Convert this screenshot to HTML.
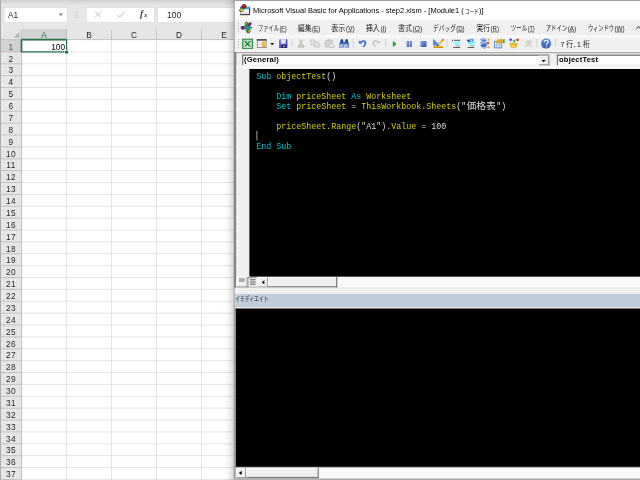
<!DOCTYPE html>
<html lang="ja"><head><meta charset="utf-8"><title>step2.xlsm - Microsoft Visual Basic for Applications</title>
<style>
*{box-sizing:border-box;margin:0;padding:0}
html,body{width:640px;height:480px;overflow:hidden;background:#fff}
body{position:relative;font-family:"Liberation Sans",sans-serif;font-size:8px;color:#000}
.a{position:absolute}
.t{position:absolute;white-space:nowrap;line-height:1;will-change:transform}
svg{position:absolute;left:0;top:0;overflow:visible}
.mn{font-family:"Liberation Sans","Noto Sans CJK JP",sans-serif;font-size:7.5px;fill:#1a1a1a}
.cd{font-family:"Liberation Mono","Noto Sans CJK JP",monospace;font-size:8.33px;white-space:pre}
</style></head>
<body>
<!-- Excel -->
<div class="a" style="left:0;top:0;width:234.5px;height:40px;background:#e6e6e6"></div>
<div class="a" style="left:0;top:0;width:234.5px;height:5px;background:linear-gradient(#cfcfcf,#e6e6e6)"></div>
<svg width="640" height="480" viewBox="0 0 640 480">
<rect x="4.1" y="7.4" width="63.40" height="15.2" fill="#fff" stroke="#d9d9d9" stroke-width="0.7"/>
<rect x="86.3" y="7.4" width="68.30" height="15.2" fill="#fff" stroke="#d9d9d9" stroke-width="0.7"/>
<rect x="157.6" y="7.4" width="82.40" height="15.2" fill="#fff" stroke="#d9d9d9" stroke-width="0.7"/>
</svg>
<div class="a" style="left:0;top:39px;width:21.5px;height:441px;background:#e6e6e6"></div>
<div class="t" style="left:8.20px;top:11.17px;font-size:8.3px;color:#2c2c2c;">A1</div>
<svg width="640" height="480" viewBox="0 0 640 480">
<path d="M58.6 13.6h4.4l-2.2 2.4z" fill="#777"/>
<rect x="76.2" y="11.8" width="1" height="1" fill="#a8a8a8"/><rect x="76.2" y="14.3" width="1" height="1" fill="#a8a8a8"/><rect x="76.2" y="16.8" width="1" height="1" fill="#a8a8a8"/>
</svg>
<div class="t" style="left:166.90px;top:10.55px;font-size:8.450000000000001px;color:#222;">100</div>
<svg width="640" height="480" viewBox="0 0 640 480" fill="none">
<path d="M95.3 12.1l5.6 4.8M100.9 12.1l-5.6 4.8" stroke="#b4b4b4" stroke-width="0.8"/>
<path d="M117.4 15l2.2 2.3 5-5.6" stroke="#b4b4b4" stroke-width="0.9"/>
</svg>
<div class="t" style="left:140.00px;top:9.00px;font-size:9.8px;color:#444;font-family:'Liberation Serif',serif;font-weight:bold;"><i>f</i></div>
<div class="t" style="left:143.60px;top:12.11px;font-size:6.6px;color:#444;font-family:'Liberation Serif',serif;font-weight:bold;"><i>x</i></div>
<div class="a" style="left:21.5px;top:29px;width:45.0px;height:10.6px;background:#d2d2d2"></div>
<div class="a" style="left:0;top:39.6px;width:21.5px;height:12.599999999999998px;background:#d2d2d2"></div>
<svg width="640" height="480" viewBox="0 0 640 480" fill="none">
<path d="M21.5 51.90H234.5M21.5 63.77H234.5M21.5 75.65H234.5M21.5 87.53H234.5M21.5 99.40H234.5M21.5 111.28H234.5M21.5 123.15H234.5M21.5 135.03H234.5M21.5 146.90H234.5M21.5 158.78H234.5M21.5 170.65H234.5M21.5 182.53H234.5M21.5 194.40H234.5M21.5 206.28H234.5M21.5 218.15H234.5M21.5 230.03H234.5M21.5 241.90H234.5M21.5 253.78H234.5M21.5 265.65H234.5M21.5 277.52H234.5M21.5 289.40H234.5M21.5 301.27H234.5M21.5 313.15H234.5M21.5 325.02H234.5M21.5 336.90H234.5M21.5 348.77H234.5M21.5 360.65H234.5M21.5 372.52H234.5M21.5 384.40H234.5M21.5 396.27H234.5M21.5 408.15H234.5M21.5 420.02H234.5M21.5 431.90H234.5M21.5 443.77H234.5M21.5 455.65H234.5M21.5 467.52H234.5M21.5 479.40H234.5" stroke="#d6d6d6" stroke-width="0.65"/>
<path d="M66.50 40V480M111.50 40V480M156.50 40V480M201.50 40V480M246.50 40V480" stroke="#d6d6d6" stroke-width="0.65"/>
<path d="M1 51.90H21.5M1 63.77H21.5M1 75.65H21.5M1 87.53H21.5M1 99.40H21.5M1 111.28H21.5M1 123.15H21.5M1 135.03H21.5M1 146.90H21.5M1 158.78H21.5M1 170.65H21.5M1 182.53H21.5M1 194.40H21.5M1 206.28H21.5M1 218.15H21.5M1 230.03H21.5M1 241.90H21.5M1 253.78H21.5M1 265.65H21.5M1 277.52H21.5M1 289.40H21.5M1 301.27H21.5M1 313.15H21.5M1 325.02H21.5M1 336.90H21.5M1 348.77H21.5M1 360.65H21.5M1 372.52H21.5M1 384.40H21.5M1 396.27H21.5M1 408.15H21.5M1 420.02H21.5M1 431.90H21.5M1 443.77H21.5M1 455.65H21.5M1 467.52H21.5M1 479.40H21.5M66.50 29.5V39.5M111.50 29.5V39.5M156.50 29.5V39.5M201.50 29.5V39.5M246.50 29.5V39.5M21.5 29.5V480M0 39.6H234.5" stroke="#b2b2b2" stroke-width="0.7"/>
<path d="M19.6 31.8v5.9h-6.4z" fill="#b7b7b7"/>
<path d="M21.5 39.3H66.5" stroke="#217346" stroke-width="1.1"/>
<path d="M21.2 39.6V51.9" stroke="#217346" stroke-width="1.1"/>
<rect x="21.7" y="39.9" width="44.90" height="12.00" stroke="#217346" stroke-width="1.25"/>
<rect x="64.80" y="50.30" width="3.6" height="3.6" fill="#217346" stroke="#fff" stroke-width="0.6"/>
</svg>
<div class="a" style="left:0;top:0;width:1px;height:480px;background:#ababab"></div>
<div class="t" style="left:-6.00px;width:100px;text-align:center;top:31.07px;font-size:8.3px;color:#217346;">A</div>
<div class="t" style="left:39.00px;width:100px;text-align:center;top:31.07px;font-size:8.3px;color:#262626;">B</div>
<div class="t" style="left:84.00px;width:100px;text-align:center;top:31.07px;font-size:8.3px;color:#262626;">C</div>
<div class="t" style="left:129.00px;width:100px;text-align:center;top:31.07px;font-size:8.3px;color:#262626;">D</div>
<div class="t" style="left:174.00px;width:100px;text-align:center;top:31.07px;font-size:8.3px;color:#262626;">E</div>
<div class="t" style="left:-39.00px;width:100px;text-align:center;top:42.62px;font-size:8.3px;color:#217346;letter-spacing:0.4px;">1</div>
<div class="t" style="left:-39.00px;width:100px;text-align:center;top:54.50px;font-size:8.3px;color:#262626;letter-spacing:0.4px;">2</div>
<div class="t" style="left:-39.00px;width:100px;text-align:center;top:66.37px;font-size:8.3px;color:#262626;letter-spacing:0.4px;">3</div>
<div class="t" style="left:-39.00px;width:100px;text-align:center;top:78.25px;font-size:8.3px;color:#262626;letter-spacing:0.4px;">4</div>
<div class="t" style="left:-39.00px;width:100px;text-align:center;top:90.12px;font-size:8.3px;color:#262626;letter-spacing:0.4px;">5</div>
<div class="t" style="left:-39.00px;width:100px;text-align:center;top:102.00px;font-size:8.3px;color:#262626;letter-spacing:0.4px;">6</div>
<div class="t" style="left:-39.00px;width:100px;text-align:center;top:113.87px;font-size:8.3px;color:#262626;letter-spacing:0.4px;">7</div>
<div class="t" style="left:-39.00px;width:100px;text-align:center;top:125.75px;font-size:8.3px;color:#262626;letter-spacing:0.4px;">8</div>
<div class="t" style="left:-39.00px;width:100px;text-align:center;top:137.62px;font-size:8.3px;color:#262626;letter-spacing:0.4px;">9</div>
<div class="t" style="left:-38.65px;width:100px;text-align:center;top:149.50px;font-size:8.3px;color:#262626;letter-spacing:0.4px;">10</div>
<div class="t" style="left:-38.65px;width:100px;text-align:center;top:161.37px;font-size:8.3px;color:#262626;letter-spacing:0.4px;">11</div>
<div class="t" style="left:-38.65px;width:100px;text-align:center;top:173.25px;font-size:8.3px;color:#262626;letter-spacing:0.4px;">12</div>
<div class="t" style="left:-38.65px;width:100px;text-align:center;top:185.12px;font-size:8.3px;color:#262626;letter-spacing:0.4px;">13</div>
<div class="t" style="left:-38.65px;width:100px;text-align:center;top:197.00px;font-size:8.3px;color:#262626;letter-spacing:0.4px;">14</div>
<div class="t" style="left:-38.65px;width:100px;text-align:center;top:208.87px;font-size:8.3px;color:#262626;letter-spacing:0.4px;">15</div>
<div class="t" style="left:-38.65px;width:100px;text-align:center;top:220.75px;font-size:8.3px;color:#262626;letter-spacing:0.4px;">16</div>
<div class="t" style="left:-38.65px;width:100px;text-align:center;top:232.62px;font-size:8.3px;color:#262626;letter-spacing:0.4px;">17</div>
<div class="t" style="left:-38.65px;width:100px;text-align:center;top:244.50px;font-size:8.3px;color:#262626;letter-spacing:0.4px;">18</div>
<div class="t" style="left:-38.65px;width:100px;text-align:center;top:256.37px;font-size:8.3px;color:#262626;letter-spacing:0.4px;">19</div>
<div class="t" style="left:-38.65px;width:100px;text-align:center;top:268.25px;font-size:8.3px;color:#262626;letter-spacing:0.4px;">20</div>
<div class="t" style="left:-38.65px;width:100px;text-align:center;top:280.12px;font-size:8.3px;color:#262626;letter-spacing:0.4px;">21</div>
<div class="t" style="left:-38.65px;width:100px;text-align:center;top:292.00px;font-size:8.3px;color:#262626;letter-spacing:0.4px;">22</div>
<div class="t" style="left:-38.65px;width:100px;text-align:center;top:303.87px;font-size:8.3px;color:#262626;letter-spacing:0.4px;">23</div>
<div class="t" style="left:-38.65px;width:100px;text-align:center;top:315.75px;font-size:8.3px;color:#262626;letter-spacing:0.4px;">24</div>
<div class="t" style="left:-38.65px;width:100px;text-align:center;top:327.62px;font-size:8.3px;color:#262626;letter-spacing:0.4px;">25</div>
<div class="t" style="left:-38.65px;width:100px;text-align:center;top:339.50px;font-size:8.3px;color:#262626;letter-spacing:0.4px;">26</div>
<div class="t" style="left:-38.65px;width:100px;text-align:center;top:351.37px;font-size:8.3px;color:#262626;letter-spacing:0.4px;">27</div>
<div class="t" style="left:-38.65px;width:100px;text-align:center;top:363.25px;font-size:8.3px;color:#262626;letter-spacing:0.4px;">28</div>
<div class="t" style="left:-38.65px;width:100px;text-align:center;top:375.12px;font-size:8.3px;color:#262626;letter-spacing:0.4px;">29</div>
<div class="t" style="left:-38.65px;width:100px;text-align:center;top:387.00px;font-size:8.3px;color:#262626;letter-spacing:0.4px;">30</div>
<div class="t" style="left:-38.65px;width:100px;text-align:center;top:398.87px;font-size:8.3px;color:#262626;letter-spacing:0.4px;">31</div>
<div class="t" style="left:-38.65px;width:100px;text-align:center;top:410.75px;font-size:8.3px;color:#262626;letter-spacing:0.4px;">32</div>
<div class="t" style="left:-38.65px;width:100px;text-align:center;top:422.62px;font-size:8.3px;color:#262626;letter-spacing:0.4px;">33</div>
<div class="t" style="left:-38.65px;width:100px;text-align:center;top:434.50px;font-size:8.3px;color:#262626;letter-spacing:0.4px;">34</div>
<div class="t" style="left:-38.65px;width:100px;text-align:center;top:446.37px;font-size:8.3px;color:#262626;letter-spacing:0.4px;">35</div>
<div class="t" style="left:-38.65px;width:100px;text-align:center;top:458.25px;font-size:8.3px;color:#262626;letter-spacing:0.4px;">36</div>
<div class="t" style="left:-38.65px;width:100px;text-align:center;top:470.12px;font-size:8.3px;color:#262626;letter-spacing:0.4px;">37</div>
<div class="t" style="left:-35.40px;width:100px;text-align:right;top:42.97px;font-size:8.3px;color:#000;">100</div>
<!-- VBA window -->
<div class="a" style="left:224px;top:0;width:10px;height:480px;background:linear-gradient(90deg,rgba(0,0,0,0),rgba(0,0,0,0.03) 40%,rgba(0,0,0,0.17))"></div>
<svg width="640" height="480" viewBox="0 0 640 480">
<rect x="234.9" y="0" width="405.1" height="480" fill="#f0f0f0"/>
<rect x="234.9" y="0" width="405.1" height="19.7" fill="#fff"/>
<rect x="233.6" y="0" width="406.4" height="1" fill="#9e9e9e"/>
<rect x="233.6" y="0" width="1.3" height="480" fill="#adadad"/>
<rect x="234.9" y="34.8" width="405.1" height="1" fill="#f8f8f8"/>
<rect x="234.9" y="35.8" width="405.1" height="1.2" fill="#fcfcfc"/>
<rect x="234.9" y="37" width="405.1" height="1.5" fill="#f6f6f6"/>
<rect x="234.9" y="51" width="405.1" height="1" fill="#fbfbfb"/>
<rect x="234.1" y="52" width="405.9" height="1.3" fill="#a6a6a6"/>
<rect x="234.1" y="52" width="2.3" height="235.6" fill="#828282"/>
<rect x="236.4" y="53.3" width="403.6" height="1.2" fill="#e4e4e4"/>
<rect x="242.1" y="54.5" width="307.3" height="11" fill="#fff"/>
<rect x="242.1" y="54.5" width="307.3" height="1.3" fill="#727272"/>
<rect x="242.1" y="54.5" width="1.2" height="11" fill="#727272"/>
<rect x="243.3" y="64.8" width="306.1" height="0.7" fill="#dcdcdc"/>
<rect x="556.9" y="54.5" width="103.1" height="11" fill="#fff"/>
<rect x="556.9" y="54.5" width="103.1" height="1.3" fill="#727272"/>
<rect x="556.9" y="54.5" width="1.2" height="11" fill="#727272"/>
<rect x="558.1" y="64.8" width="101.9" height="0.7" fill="#dcdcdc"/>
<rect x="539" y="55.8" width="10.4" height="9.7" fill="#f0f0f0"/>
<rect x="539" y="55.8" width="0.8" height="8.6" fill="#fff"/>
<rect x="539" y="55.8" width="9.3" height="0.8" fill="#fff"/>
<rect x="548.3" y="55.8" width="1.1" height="9.7" fill="#7c7c7c"/>
<rect x="539" y="64.4" width="10.4" height="1.1" fill="#7c7c7c"/>
<rect x="236.4" y="65.6" width="403.6" height="3.4" fill="#f8f8f8"/>
<rect x="236.4" y="65.6" width="5.7" height="3.4" fill="#f2f2f2"/>
<rect x="236.4" y="69" width="13" height="207.8" fill="#f0f0f0"/>
<rect x="249.4" y="69" width="390.6" height="207.8" fill="#000"/>
<rect x="236.4" y="276.8" width="403.6" height="10.2" fill="#f8f8f8"/>
<rect x="236.6" y="277.1" width="10.9" height="10.3" fill="#f0f0f0"/>
<rect x="236.6" y="277.1" width="0.8" height="9.3" fill="#fff"/>
<rect x="236.6" y="277.1" width="9.9" height="0.8" fill="#fff"/>
<rect x="246.5" y="277.1" width="1" height="10.3" fill="#8c8c8c"/>
<rect x="236.6" y="286.4" width="10.9" height="1" fill="#8c8c8c"/>
<rect x="247.5" y="277.1" width="9.2" height="10.3" fill="#f0f0f0"/>
<rect x="247.5" y="277.1" width="9.2" height="1" fill="#8c8c8c"/>
<rect x="247.5" y="277.1" width="1" height="10.3" fill="#8c8c8c"/>
<rect x="247.5" y="286.6" width="9.6" height="0.9" fill="#a8a8a8"/>
<rect x="257.4" y="277.1" width="10.6" height="10.3" fill="#f2f2f2"/>
<rect x="257.4" y="277.1" width="0.8" height="9.3" fill="#fff"/>
<rect x="257.4" y="277.1" width="9.6" height="0.8" fill="#fff"/>
<rect x="267" y="277.1" width="1" height="10.3" fill="#9c9c9c"/>
<rect x="257.4" y="286.4" width="10.6" height="1" fill="#9c9c9c"/>
<rect x="268" y="277.1" width="69.2" height="10.3" fill="#f0f0f0"/>
<rect x="268" y="277.1" width="0.8" height="9.1" fill="#fff"/>
<rect x="268" y="277.1" width="68" height="0.8" fill="#fff"/>
<rect x="336" y="277.1" width="1.2" height="10.3" fill="#7e7e7e"/>
<rect x="268" y="286.2" width="69.2" height="1.2" fill="#7e7e7e"/>
<rect x="234.9" y="294" width="405.1" height="13" fill="#bfcddb"/>
<rect x="234.9" y="307" width="405.1" height="1.2" fill="#e6eaee"/>
<rect x="234.9" y="308.1" width="405.1" height="1" fill="#6a6a6a"/>
<rect x="234.5" y="309" width="1.5" height="171" fill="#8e8e8e"/>
<rect x="236" y="309" width="404" height="157.9" fill="#000"/>
<rect x="236" y="466.9" width="404" height="1" fill="#a0a0a0"/>
<rect x="236" y="467.9" width="404" height="10.7" fill="#f8f8f8"/>
<rect x="234.5" y="478.6" width="405.5" height="1.4" fill="#a6a6a6"/>
<rect x="234.5" y="477" width="84.4" height="3" fill="#b2b2b2"/>
<rect x="235.8" y="467.9" width="10.2" height="10.2" fill="#f4f4f4"/>
<rect x="235.8" y="467.9" width="0.8" height="9.2" fill="#fff"/>
<rect x="235.8" y="467.9" width="9.2" height="0.8" fill="#fff"/>
<rect x="245" y="467.9" width="1" height="10.2" fill="#989898"/>
<rect x="235.8" y="477.1" width="10.2" height="1" fill="#989898"/>
<rect x="246.2" y="467.9" width="72.6" height="10.2" fill="#f0f0f0"/>
<rect x="246.2" y="467.9" width="0.8" height="9" fill="#fff"/>
<rect x="246.2" y="467.9" width="71.4" height="0.8" fill="#fff"/>
<rect x="317.6" y="467.9" width="1.2" height="10.2" fill="#7e7e7e"/>
<rect x="246.2" y="476.9" width="72.6" height="1.2" fill="#7e7e7e"/>
</svg>
<div class="t" style="left:243.80px;top:55.87px;font-size:7.6px;color:#000;font-weight:bold;letter-spacing:0.19px;">(General)</div>
<div class="t" style="left:559.40px;top:55.87px;font-size:7.6px;color:#000;font-weight:bold;letter-spacing:0.18px;">objectTest</div>
<div class="t" id="ttl" style="left:252.8px;top:7.45px;font-size:7.5px;color:#000;transform-origin:0 0;transform:scaleX(1)">Microsoft Visual Basic for Applications - step2.xlsm - [Module1 (</div>
<div class="t" style="left:478.90px;top:7.45px;font-size:7.5px;color:#000;">)]</div>
<svg width="640" height="480" viewBox="0 0 640 480">
<text x="464.9" y="13.5" font-size="6.5" fill="#222" font-family="'Liberation Sans','Noto Sans CJK JP',sans-serif" textLength="13.7" lengthAdjust="spacingAndGlyphs">コード</text>
<text class="mn" x="257.9" y="30.67" textLength="21" lengthAdjust="spacingAndGlyphs">ファイル</text>
<text class="mn" x="279.4" y="30.67" textLength="7.4" lengthAdjust="spacingAndGlyphs">(F)</text>
<text class="mn" x="297.7" y="30.67" textLength="13.9" lengthAdjust="spacingAndGlyphs">編集</text>
<text class="mn" x="312.05" y="30.67" textLength="8.2" lengthAdjust="spacingAndGlyphs">(E)</text>
<text class="mn" x="331.3" y="30.67" textLength="14.1" lengthAdjust="spacingAndGlyphs">表示</text>
<text class="mn" x="346" y="30.67" textLength="8.6" lengthAdjust="spacingAndGlyphs">(V)</text>
<text class="mn" x="365.7" y="30.67" textLength="14.1" lengthAdjust="spacingAndGlyphs">挿入</text>
<text class="mn" x="380.4" y="30.67" textLength="6.1" lengthAdjust="spacingAndGlyphs">(I)</text>
<text class="mn" x="398.1" y="30.67" textLength="13.9" lengthAdjust="spacingAndGlyphs">書式</text>
<text class="mn" x="412.5" y="30.67" textLength="9.6" lengthAdjust="spacingAndGlyphs">(O)</text>
<text class="mn" x="433.1" y="30.67" textLength="22.8" lengthAdjust="spacingAndGlyphs">デバッグ</text>
<text class="mn" x="456.15" y="30.67" textLength="8.5" lengthAdjust="spacingAndGlyphs">(D)</text>
<text class="mn" x="476.5" y="30.67" textLength="13.6" lengthAdjust="spacingAndGlyphs">実行</text>
<text class="mn" x="490.6" y="30.67" textLength="8.4" lengthAdjust="spacingAndGlyphs">(R)</text>
<text class="mn" x="510.7" y="30.67" textLength="16.5" lengthAdjust="spacingAndGlyphs">ツール</text>
<text class="mn" x="527.65" y="30.67" textLength="7" lengthAdjust="spacingAndGlyphs">(T)</text>
<text class="mn" x="545.7" y="30.67" textLength="21.6" lengthAdjust="spacingAndGlyphs">アドイン</text>
<text class="mn" x="567.85" y="30.67" textLength="8.1" lengthAdjust="spacingAndGlyphs">(A)</text>
<text class="mn" x="587.9" y="30.67" textLength="26" lengthAdjust="spacingAndGlyphs">ウィンドウ</text>
<text class="mn" x="614.45" y="30.67" textLength="10.2" lengthAdjust="spacingAndGlyphs">(W)</text>
<text class="mn" x="635.7" y="30.67" textLength="19" lengthAdjust="spacingAndGlyphs">ヘルプ</text>
<text class="mn" x="654.9" y="30.67" textLength="8.7" lengthAdjust="spacingAndGlyphs">(H)</text>
<path d="M281.26 31.85H285.01M314.05 31.85H318.25M348.04 31.85H352.61M382.42 31.85H384.50M414.51 31.85H420.14M457.97 31.85H462.85M492.56 31.85H497.08M529.36 31.85H532.99M569.74 31.85H574.05M616.39 31.85H622.73M656.75 31.85H661.71" stroke="#1a1a1a" stroke-width="0.6" fill="none"/>
<text x="560.4" y="46.93" font-size="7.5" fill="#1a1a1a" font-family="'Liberation Sans','Noto Sans CJK JP',sans-serif" textLength="29.5" lengthAdjust="spacingAndGlyphs">7 行, 1 桁</text>
<text x="235.2" y="300.9" font-size="7" fill="#1a1a1a" font-family="'Liberation Sans','Noto Sans CJK JP',sans-serif" textLength="33.3" lengthAdjust="spacingAndGlyphs">イミディエイト</text>
<g fill="#00c4c8">
<text class="cd" x="256.25" y="78.99">Sub</text>
<text class="cd" x="276.25" y="98.99">Dim</text>
<text class="cd" x="351.25" y="98.99">As</text>
<text class="cd" x="276.25" y="108.99">Set</text>
<text class="cd" x="256.25" y="148.99">End</text>
<text class="cd" x="276.25" y="148.99">Sub</text>
</g>
<g fill="#d0d000">
<text class="cd" x="276.25" y="78.99">objectTest</text>
<text class="cd" x="296.25" y="98.99">priceSheet</text>
<text class="cd" x="366.25" y="98.99">Worksheet</text>
<text class="cd" x="296.25" y="108.99">priceSheet</text>
<text class="cd" x="361.25" y="108.99">ThisWorkbook</text>
<text class="cd" x="426.25" y="108.99">Sheets</text>
<text class="cd" x="276.25" y="128.99">priceSheet</text>
<text class="cd" x="331.25" y="128.99">Range</text>
<text class="cd" x="391.25" y="128.99">Value</text>
</g>
<g fill="#dcdcdc">
<text class="cd" x="326.25" y="78.99">()</text>
<text class="cd" x="351.25" y="108.99">=</text>
<text class="cd" x="421.25" y="108.99">.</text>
<text class="cd" x="456.25" y="108.99">("</text>
<text x="466.4" y="109.2" font-size="9.5" font-family="'Liberation Mono','Noto Sans CJK JP',monospace" textLength="29.6" lengthAdjust="spacingAndGlyphs">価格表</text>
<text class="cd" x="496.25" y="108.99">")</text>
<text class="cd" x="326.25" y="128.99">.</text>
<text class="cd" x="356.25" y="128.99">("A1")</text>
<text class="cd" x="386.25" y="128.99">.</text>
<text class="cd" x="421.25" y="128.99">=</text>
<text class="cd" x="431.25" y="128.99">100</text>
</g>
<path d="M256.9 131V140.4" stroke="#d8d8d8" stroke-width="0.8" fill="none"/>
<path d="M264.4 280.2v4.2l-2.6-2.1z" fill="#000"/>
<path d="M241.7 470.8v4.2l-2.9-2.1z" fill="#000"/>
<path d="M541.6 60h4l-2 2.3z" fill="#000"/>
<path d="M239 279h5.6M239 281h5.6" stroke="#666" stroke-width="1" fill="none"/>
<path d="M250 279.8h5.6M250 282h5.6M250 284.2h5.6" stroke="#5a5a5a" stroke-width="1" fill="none"/>
<!-- icons -->
<defs>
<linearGradient id="gb" x1="0" y1="0" x2="1" y2="1"><stop offset="0" stop-color="#8fb0f4"/><stop offset="1" stop-color="#2746a8"/></linearGradient>
<linearGradient id="gt" x1="0" y1="0" x2="1" y2="0"><stop offset="0" stop-color="#3a62d0"/><stop offset="1" stop-color="#25c4e6"/></linearGradient>
<linearGradient id="gs" x1="0" y1="0" x2="1" y2="1"><stop offset="0" stop-color="#8a8af0"/><stop offset="1" stop-color="#2a2aa0"/></linearGradient>
<linearGradient id="gh" x1="0" y1="0" x2="0" y2="1"><stop offset="0" stop-color="#5a8ede"/><stop offset="1" stop-color="#2c5eb8"/></linearGradient>
<linearGradient id="gr" x1="0" y1="0" x2="0" y2="1"><stop offset="0" stop-color="#f0c030"/><stop offset="1" stop-color="#b88408"/></linearGradient>
</defs>
<g fill="#aaa"><rect x="238" y="22.9" width="0.9" height="0.9"/><rect x="238" y="25.5" width="0.9" height="0.9"/><rect x="238" y="28.1" width="0.9" height="0.9"/><rect x="238" y="30.7" width="0.9" height="0.9"/><rect x="238" y="38.9" width="0.9" height="0.9"/><rect x="238" y="41.5" width="0.9" height="0.9"/><rect x="238" y="44.1" width="0.9" height="0.9"/><rect x="238" y="46.7" width="0.9" height="0.9"/></g>
<g>
<rect x="240.3" y="7.1" width="9.2" height="7.6" fill="#fdfdfd" stroke="#6a6a6a" stroke-width="0.7"/>
<path d="M240.4 12.6h9v1.6h-9z" fill="#e4e4e4"/>
<path d="M240 14.7h9.6v-7.4" fill="none" stroke="#2a2a2a" stroke-width="1"/>
<rect x="240.4" y="7" width="9" height="2.3" fill="url(#gt)"/>
<path d="M242 12.2h4.6" stroke="#b0b0b0" stroke-width="0.7"/>
<ellipse cx="244" cy="6.2" rx="2.2" ry="1.8" fill="#c40808" stroke="#3a0808" stroke-width="0.6"/>
<ellipse cx="243.4" cy="5.6" rx="0.8" ry="0.5" fill="#ee5a5a"/>
<path d="M238.9 10.5l2.6-2.5 2.7 1.1-2.7 2.9z" fill="#cccc10" stroke="#33330a" stroke-width="0.6"/>
</g>
<g stroke="#0c2a2a" stroke-width="0.5">
<path d="M241.6 27l4-1.2 0.6-3 2 0.4 0.4 3 3.6 1.6-3 1 -0.4 3.6-1.8 0.2-1-3.6z" fill="#1f9494"/>
<path d="M244.8 26.4l3.4 0.3 1 2.5-3.8-0.1z" fill="#2aaeae" stroke="none"/>
<ellipse cx="246.3" cy="23.7" rx="1.25" ry="1.6" fill="#b4b410"/>
<ellipse cx="249.8" cy="24.2" rx="1.3" ry="1.8" transform="rotate(30 249.8 24.2)" fill="#b010b0"/>
<ellipse cx="242.7" cy="28" rx="1.9" ry="1.4" transform="rotate(25 242.7 28)" fill="#b010b0"/>
<ellipse cx="248.8" cy="31.3" rx="1.25" ry="1.8" transform="rotate(25 248.8 31.3)" fill="#b4b410"/>
<ellipse cx="246.2" cy="27.9" rx="1.4" ry="1.1" fill="#14a02c" stroke="none"/>
</g>
<g>
<rect x="242.7" y="39.2" width="9.8" height="9.2" fill="#a6d6ad" stroke="#3f9150" stroke-width="1.2"/>
<rect x="243.9" y="40.4" width="7.4" height="6.8" fill="#bfe2c4"/>
<path d="M244.8 41l5.6 5.8M250.4 41l-5.4 5.4" stroke="#dcf0df" stroke-width="2.2" fill="none"/>
<path d="M244.8 41l5.6 5.8M250.4 41l-5.4 5.4" stroke="#1f7a36" stroke-width="1.3" fill="none"/>
<path d="M244 47.2h7.2" stroke="#e6f4e8" stroke-width="0.7"/>
</g>
<g>
<rect x="257.3" y="39.6" width="8.8" height="8" fill="#fff" stroke="#7a7a7a" stroke-width="0.8"/>
<rect x="256.9" y="39.2" width="9.6" height="1.5" fill="#444"/>
<rect x="261.8" y="41.5" width="3.5" height="5.6" fill="#eda63a"/>
<path d="M258.4 42.4h2.6M258.4 44.4h2.6" stroke="#aaa" stroke-width="0.7"/>
<path d="M262 43.2h3.2M262 45.2h3.2" stroke="#f6d9a0" stroke-width="0.5"/>
</g>
<path d="M270.2 43h4l-2 2.3z" fill="#111"/>
<g>
<rect x="279" y="39.3" width="8.4" height="8.7" rx="0.5" fill="url(#gs)"/>
<rect x="281" y="39.5" width="4.6" height="4.1" fill="#fff"/>
<rect x="281" y="39.5" width="4.6" height="4.1" fill="#b8c0f0" opacity="0.35"/>
<rect x="281.4" y="45" width="4.2" height="3" fill="#1c1c58"/>
<rect x="283.3" y="45.6" width="1.1" height="1.8" fill="#e8e8ff"/>
</g>
<path d="M292.1 39V47.2M353.4 39V47.2M385.5 39V47.2M447 39V47.2M536.9 39V47.2M555.3 39V47.2" stroke="#cfcfcf" stroke-width="0.9" fill="none"/>
<g fill="none" stroke="#b8b8b8" stroke-width="1.15">
<path d="M299.4 39.6l2.8 5.4M302.7 39.6l-2.8 5.4"/>
<ellipse cx="299.4" cy="46.3" rx="1.1" ry="1.2"/><ellipse cx="302.8" cy="46.3" rx="1.1" ry="1.2"/>
</g>
<g fill="#dedede" stroke="#c4c4c4" stroke-width="0.8">
<path d="M310.7 39.8h3.4l1.4 1.4v4.2h-4.8z"/>
<path d="M314.6 41.7h3.6l1.5 1.5v4h-5.1z"/>
</g>
<g fill="#d6d6d6" stroke="#c0c0c0" stroke-width="0.8">
<path d="M325.3 40.6h7.4v6.4h-7.4z"/>
<path d="M327.6 39.7h2.8v1.4h-2.8z" fill="#ccc"/>
<path d="M329 43.4h3.8l1.7 1.6v2.4H329z" fill="#e4e4e4"/>
</g>
<g>
<path d="M341.1 39.3h1.5l1 3.7 0.2 4.5h-4.6l0.2-4z" fill="#4a6cba"/>
<path d="M345.9 39.3h1.4l1.6 4.2 0.2 4h-4.5v-4.5z" fill="#4a6cba"/>
<path d="M341.1 39.3h1.5l0.8 3h-3z M345.9 39.3h1.4l1.1 3h-3.2z" fill="#1f3d8c"/>
<rect x="343.3" y="41.8" width="1.6" height="2" fill="#2a4a9c"/>
<rect x="339.5" y="44.3" width="3.7" height="2.8" fill="#86a2de"/><rect x="344.9" y="44.3" width="3.7" height="2.8" fill="#86a2de"/>
<rect x="340.3" y="44.8" width="1.1" height="1.5" fill="#fff"/><rect x="345.7" y="44.8" width="1.1" height="1.5" fill="#fff"/>
</g>
<path d="M358.6 43.4l0.6-3 1.2 1.1c1.6-1.6 4-1.8 5.2-0.6c1.6 1.6 0.6 5-2.4 6.6l-0.6-0.9c1.8-1.4 2.4-3.4 1.5-4.3c-0.7-0.7-1.8-0.5-2.6 0.3l1.3 1.2z" fill="#3868d8"/>
<path d="M380.2 43.2l-0.6-3-1.2 1.1c-1.6-1.6-4-1.8-5.2-0.6c-1.6 1.6-0.6 4.8 2.2 6.4l0.6-0.9c-1.6-1.2-2.2-3.2-1.3-4.1c0.7-0.7 1.8-0.5 2.6 0.3l-1.3 1.2z" fill="#c8c8c8"/>
<path d="M392.9 41v6l3.6-3z" fill="#21a121"/>
<rect x="406.7" y="41" width="2.2" height="6" fill="url(#gb)"/><rect x="409.6" y="41" width="2.2" height="6" fill="url(#gb)"/>
<rect x="420.4" y="41" width="6" height="6" fill="url(#gb)"/>
<g>
<path d="M433.2 38.8v6.8h6.6z" fill="#4a7ae2"/>
<path d="M434.6 42.4v1.8h1.8z" fill="#9cb8f4"/>
<path d="M442.2 39.6l1.2 1.1-4.4 4.6-1.8 0.6 0.5-1.8z" fill="#ecd060" stroke="#8a7420" stroke-width="0.3"/>
<path d="M437.2 45.9l0.5-1.6 1.2 1.1z" fill="#333"/>
<circle cx="442.9" cy="39.7" r="1" fill="#d86050"/>
<rect x="433.6" y="46" width="9.4" height="2" fill="url(#gr)"/>
</g>
<g>
<rect x="452" y="39.8" width="1.1" height="1" fill="#222"/>
<rect x="454" y="39.8" width="6.2" height="0.9" fill="#4a4a4a"/>
<rect x="454.2" y="41.5" width="6" height="3.3" fill="#86ffff"/>
<rect x="455.6" y="45.4" width="4.6" height="0.9" fill="#a0a0a0"/>
<rect x="453.2" y="47" width="7" height="0.9" fill="#4a4a4a"/>
</g>
<g>
<rect x="468" y="41.5" width="7" height="3.3" fill="#86ffff"/>
<rect x="470" y="45.3" width="4.2" height="0.9" fill="#a0a0a0"/>
<rect x="467.6" y="47" width="6.6" height="0.9" fill="#4a4a4a"/>
<path d="M469.4 41.6c-0.4-2.2 1-3.4 2.6-3.2c1.4 0.2 2 1.6 1.2 2.8l-1.4 1.2-0.8-0.8l1.1-1c0.3-0.6 0-1.1-0.5-1.1c-0.7 0-1.2 0.7-1 2z" fill="#4a8ae8"/>
<path d="M466.8 40.2l1.8-0.9 1.6 1.9-1.6 1.1z" fill="#1038c0"/>
</g>
<g>
<path d="M480.2 39l4.4-0.8 2.2 2.6-4.6 1.2z" fill="#4a78d8"/>
<path d="M481 39.4l3.2-0.6 0.8 0.9-3.4 0.7z" fill="#a8c0f0"/>
<path d="M479.8 42.4l5.4-1.4 1.6 2.4-5.4 1.6z" fill="#6a92e4"/>
<path d="M480.8 42.8l4-1 0.6 0.8-4.2 1.1z" fill="#c4d6f8"/>
<path d="M480.2 45.2l5.4-1.4 1.6 2-5 1.8z" fill="#3a60c0"/>
<path d="M482.6 47.6l4-1.4 0.8 1.4-3 1.4z" fill="#88a8e8"/>
<path d="M488.8 38.3l1.6 1.4-1.6 1.4-1.6-1.4z" fill="#f0b040"/>
<circle cx="487.8" cy="43.2" r="1.35" fill="#e04828"/>
<path d="M488.6 45.8l1.6 1.4-1.6 1.4-1.6-1.4z" fill="#f0b040"/>
</g>
<g>
<rect x="494.3" y="41.3" width="7.4" height="6.6" fill="#dfe8f8" stroke="#5672b4" stroke-width="0.8"/>
<path d="M496.8 43.4v4.2M499.2 43.4v4.2M494.6 45.2h7" stroke="#8ca4d8" stroke-width="0.6" fill="none"/>
<path d="M495.8 41.4c0.6-1.6 2.6-2.6 4.6-2.6c1.6 0 2.8 0.6 3 1.6l-0.6 2.2-2.6 0.8-1.4-0.6-1 1.2-1.4-0.4z" fill="#d8a830"/>
<path d="M497.2 40.6c1-0.9 2.6-1.2 4-0.9" stroke="#f4dc80" stroke-width="0.6" fill="none"/>
<path d="M503.2 39.4l1.4-0.4v4.4l-1.6-0.6z" fill="#2f9f44"/>
</g>
<g>
<path d="M509.2 42.4l2.2 0.8 2.2-0.6 2.2 0.6 2.2-0.8-0.8 2.6-0.8 2.6c-1.8 0.7-4 0.7-5.6 0l-0.8-2.6z" fill="#e2b830"/>
<ellipse cx="513.4" cy="46.2" rx="2" ry="1" fill="#f6e070"/>
<circle cx="510.6" cy="39.7" r="1.2" fill="#3434c4"/>
<path d="M515 39.5v3l-2.6-1.5z" fill="#2f9f44"/>
<rect x="516.3" y="38.8" width="2.4" height="2.2" rx="0.5" fill="#d03424"/>
</g>
<g stroke="#cacaca" stroke-width="1.3" fill="none" stroke-linecap="round">
<path d="M526 46.2l5-5"/><path d="M531.4 46.4l-3.2-3.4"/><path d="M526 42.4l2.6-1.6 1.2 1.2"/>
</g>
<circle cx="546.1" cy="43.6" r="5" fill="url(#gh)"/>
<path d="M544.2 42.2c0-1.3 0.9-2 2-2c1.2 0 2 0.7 2 1.7c0 1.6-1.7 1.5-1.7 3.1" stroke="#fff" stroke-width="1.1" fill="none"/>
<circle cx="546.4" cy="46.6" r="0.7" fill="#fff"/>
</svg>
</body></html>
